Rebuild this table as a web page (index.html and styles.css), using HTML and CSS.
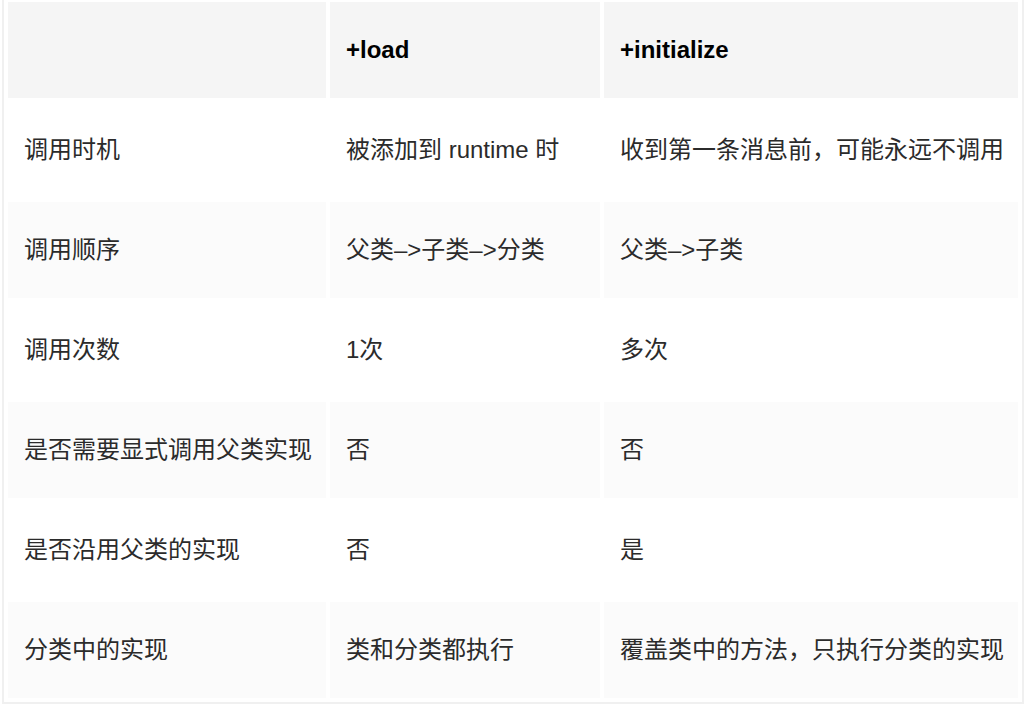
FILE: index.html
```html
<!DOCTYPE html>
<html lang="zh-CN">
<head>
<meta charset="utf-8">
<title>+load vs +initialize</title>
<link rel="stylesheet" href="styles.css">
</head>
<body>
<table class="cmp">
  <colgroup>
    <col class="c1"><col class="c2"><col class="c3">
  </colgroup>
  <thead>
    <tr><th></th><th>+load</th><th>+initialize</th></tr>
  </thead>
  <tbody>
    <tr><td>调用时机</td><td>被添加到 runtime 时</td><td>收到第一条消息前，可能永远不调用</td></tr>
    <tr><td>调用顺序</td><td>父类–&gt;子类–&gt;分类</td><td>父类–&gt;子类</td></tr>
    <tr><td>调用次数</td><td>1次</td><td>多次</td></tr>
    <tr><td>是否需要显式调用父类实现</td><td>否</td><td>否</td></tr>
    <tr><td>是否沿用父类的实现</td><td>否</td><td>是</td></tr>
    <tr><td>分类中的实现</td><td>类和分类都执行</td><td>覆盖类中的方法，只执行分类的实现</td></tr>
  </tbody>
</table>
</body>
</html>
```
FILE: styles.css
```css
html, body {
  margin: 0;
  padding: 0;
  background: #ffffff;
}
body {
  padding-left: 2px;
  font-family: "Liberation Sans", "Noto Sans CJK SC", sans-serif;
  font-size: 24px;
  color: #2b2b2b;
}
.cmp {
  margin-top: -2px;
  width: 1022px;
  table-layout: fixed;
  border-collapse: separate;
  border-spacing: 4px;
  border: 2px solid #f0f0f0;
  border-top: none;
}
.c1 { width: 318px; }
.c2 { width: 270px; }
.c3 { width: 414px; }
.cmp th, .cmp td {
  height: 96px;
  padding: 0 16px;
  text-align: left;
  vertical-align: middle;
  white-space: nowrap;
  box-sizing: border-box;
}
.cmp td {
  padding-bottom: 5px;
}
.cmp th {
  background: #f5f5f5;
  color: #000000;
  font-weight: bold;
}
.cmp tbody tr:nth-child(odd) td { background: #ffffff; }
.cmp tbody tr:nth-child(even) td { background: #fbfbfb; }
```
